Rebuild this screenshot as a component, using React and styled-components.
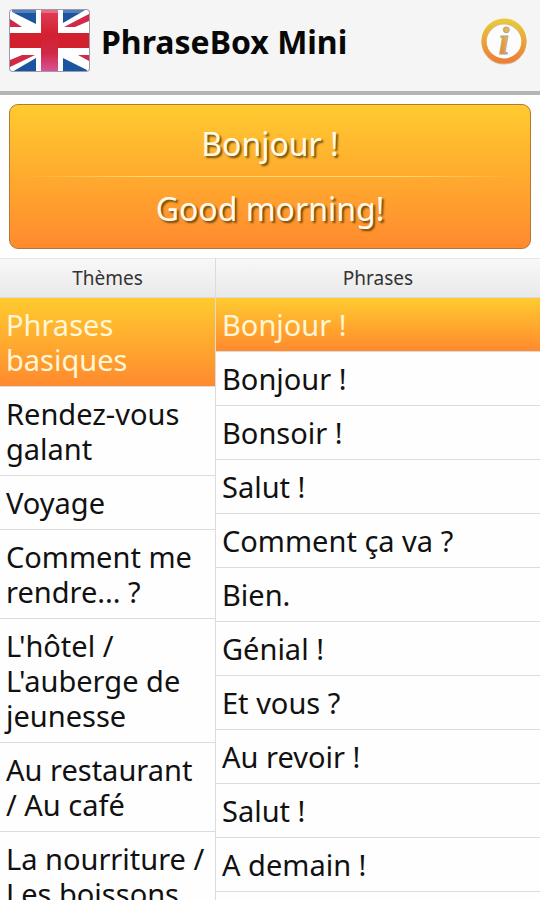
import React, { useState } from "react";
import styled, { createGlobalStyle, css, ThemeProvider } from "styled-components";

const theme = {
  colors: {
    bar: "#f5f5f5",
    line: "#dcdcdc",
    text: "#111",
    selectedText: "#fff6d8",
  },
  gradient: "linear-gradient(to bottom, #ffcb2f, #ff8a2e)",
};

const GlobalStyle = createGlobalStyle`
  * {
    box-sizing: border-box;
  }

  body {
    margin: 0;
    background: #fefefe;
    color: #111;
    font-family: "Noto Sans", "Open Sans", sans-serif;
  }
`;

const Page = styled.div`
  height: 100vh;
  display: flex;
  flex-direction: column;
  overflow: hidden;
`;

const TopBar = styled.header`
  flex: none;
  display: flex;
  align-items: center;
  height: 95px;
  padding: 0 12px 8px 8px;
  background: ${({ theme }) => theme.colors.bar};
  border-bottom: 4px solid #b5b5b5;
`;

const Title = styled.h1`
  flex: 1;
  margin: 0 0 0 11px;
  font-size: 32px;
  line-height: 40px;
  font-weight: 700;
  color: #080808;
`;

const IconButton = styled.button`
  display: flex;
  padding: 0;
  border: 0;
  background: none;
  cursor: pointer;
`;

const Card = styled.section`
  flex: none;
  margin: 9px;
  padding: 7px 12px;
  border: 1px solid #b07a35;
  border-radius: 9px;
  background: ${({ theme }) => theme.gradient};
`;

const CardLine = styled.p`
  margin: 0;
  font-size: 32px;
  line-height: 64px;
  text-align: center;
  color: #fffbe8;
  text-shadow: 2px 2px 2px rgba(70, 45, 0, 0.75);
`;

const Divider = styled.hr`
  height: 1px;
  margin: 0;
  border: 0;
  background: linear-gradient(to right, transparent, #ffdb7c 25%, #ffdb7c 75%, transparent);
`;

const Columns = styled.main`
  flex: 1;
  min-height: 0;
  display: grid;
  grid-template-columns: 2fr 3fr;
`;

const Column = styled.section`
  min-width: 0;
  min-height: 0;
  display: flex;
  flex-direction: column;

  &:first-child {
    border-right: 1px solid ${({ theme }) => theme.colors.line};
  }
`;

const ColumnTitle = styled.h2`
  flex: none;
  margin: 0;
  border-top: 1px solid #e6e6e6;
  border-bottom: 1px solid ${({ theme }) => theme.colors.line};
  background: linear-gradient(to bottom, #f8f8f8, #e9e9e9);
  font-size: 19px;
  line-height: 38px;
  font-weight: 400;
  text-align: center;
  color: #333;
`;

const List = styled.ul`
  flex: 1;
  min-height: 0;
  margin: 0;
  padding: 0;
  list-style: none;
  overflow-y: auto;
  scrollbar-width: none;
`;

const Row = styled.button`
  display: block;
  width: 100%;
  padding: 9px 6px;
  border: 0;
  border-bottom: 1px solid ${({ theme }) => theme.colors.line};
  background: none;
  color: ${({ theme }) => theme.colors.text};
  font-family: inherit;
  font-size: 29px;
  line-height: 35px;
  text-align: left;
  cursor: pointer;

  ${({ $selected, theme }) =>
    $selected &&
    css`
      background: ${theme.gradient};
      color: ${theme.colors.selectedText};
    `}
`;

const themes = [
  "Phrases basiques",
  "Rendez-vous galant",
  "Voyage",
  "Comment me rendre... ?",
  "L'hôtel / L'auberge de jeunesse",
  "Au restaurant / Au café",
  "La nourriture / Les boissons",
];

const phrases = [
  { fr: "Bonjour !", en: "Good morning!" },
  { fr: "Bonjour !", en: "Good afternoon!" },
  { fr: "Bonsoir !", en: "Good evening!" },
  { fr: "Salut !", en: "Hi!" },
  { fr: "Comment ça va ?", en: "How are you?" },
  { fr: "Bien.", en: "Fine." },
  { fr: "Génial !", en: "Great!" },
  { fr: "Et vous ?", en: "And you?" },
  { fr: "Au revoir !", en: "Goodbye!" },
  { fr: "Salut !", en: "Bye!" },
  { fr: "A demain !", en: "See you tomorrow!" },
];

const Flag = () => (
  <svg width="82" height="66" viewBox="0 0 82 66" aria-hidden="true">
    <defs>
      <clipPath id="flag">
        <rect x="2" y="1" width="79" height="61" rx="3" />
      </clipPath>
      <linearGradient id="flagRed" x1="0" y1="0" x2="0" y2="1">
        <stop offset="0" stopColor="#e0405c" />
        <stop offset="0.4" stopColor="#d3202f" />
        <stop offset="0.7" stopColor="#d02845" />
        <stop offset="1" stopColor="#d9559a" />
      </linearGradient>
    </defs>
    <rect x="1" y="0" width="81" height="63" rx="4" fill="#9a9aac" />
    <g clipPath="url(#flag)">
      <rect width="82" height="66" fill="#fff" />
      <path
        d="M4 0H28V15L4 3ZM55 0H79L55 14ZM4 63L28 49V63ZM55 49L79 61V63H55Z"
        fill="#1c559f"
      />
      <path
        d="M2 10L14 18H2ZM81 5V12L67 18H56ZM2 58V51L14 46H27ZM70 46H81V52Z"
        fill="#d02a48"
      />
      <path d="M0 24H82V39H0Z" fill="#d3202f" />
      <path d="M33 0H50V63H33Z" fill="url(#flagRed)" />
      <rect x="2" y="1" width="79" height="3" fill="#fff" opacity="0.25" />
    </g>
  </svg>
);

const InfoIcon = () => (
  <svg width="48" height="50" viewBox="0 0 48 50" aria-hidden="true">
    <defs>
      <linearGradient id="ring" x1="0" y1="0" x2="0" y2="1">
        <stop offset="0" stopColor="#e9c93a" />
        <stop offset="1" stopColor="#ec7f38" />
      </linearGradient>
    </defs>
    <circle cx="24" cy="25" r="20" fill="#fcfcfc" stroke="#d9b98c" strokeWidth="5" />
    <circle cx="24" cy="24" r="20" fill="none" stroke="url(#ring)" strokeWidth="5" />
    <text
      x="24"
      y="37"
      textAnchor="middle"
      fontFamily="Liberation Serif, serif"
      fontStyle="italic"
      fontWeight="700"
      fontSize="38"
      fill="url(#ring)"
      stroke="#b5a596"
      strokeWidth="1"
    >
      i
    </text>
  </svg>
);

const App = () => {
  const [themeIndex, setThemeIndex] = useState(0);
  const [phraseIndex, setPhraseIndex] = useState(0);

  return (
    <ThemeProvider theme={theme}>
      <GlobalStyle />
      <Page>
        <TopBar>
          <Flag />
          <Title>PhraseBox Mini</Title>
          <IconButton type="button" aria-label="Informations">
            <InfoIcon />
          </IconButton>
        </TopBar>
        <Card>
          <CardLine lang="fr">{phrases[phraseIndex].fr}</CardLine>
          <Divider />
          <CardLine lang="en">{phrases[phraseIndex].en}</CardLine>
        </Card>
        <Columns>
          <Column>
            <ColumnTitle>Thèmes</ColumnTitle>
            <List>
              {themes.map((name, index) => (
                <li key={index}>
                  <Row
                    type="button"
                    $selected={index === themeIndex}
                    onClick={() => setThemeIndex(index)}
                  >
                    {name}
                  </Row>
                </li>
              ))}
            </List>
          </Column>
          <Column>
            <ColumnTitle>Phrases</ColumnTitle>
            <List>
              {phrases.map((phrase, index) => (
                <li key={index}>
                  <Row
                    type="button"
                    $selected={index === phraseIndex}
                    onClick={() => setPhraseIndex(index)}
                  >
                    {phrase.fr}
                  </Row>
                </li>
              ))}
            </List>
          </Column>
        </Columns>
      </Page>
    </ThemeProvider>
  );
};

export default App;
